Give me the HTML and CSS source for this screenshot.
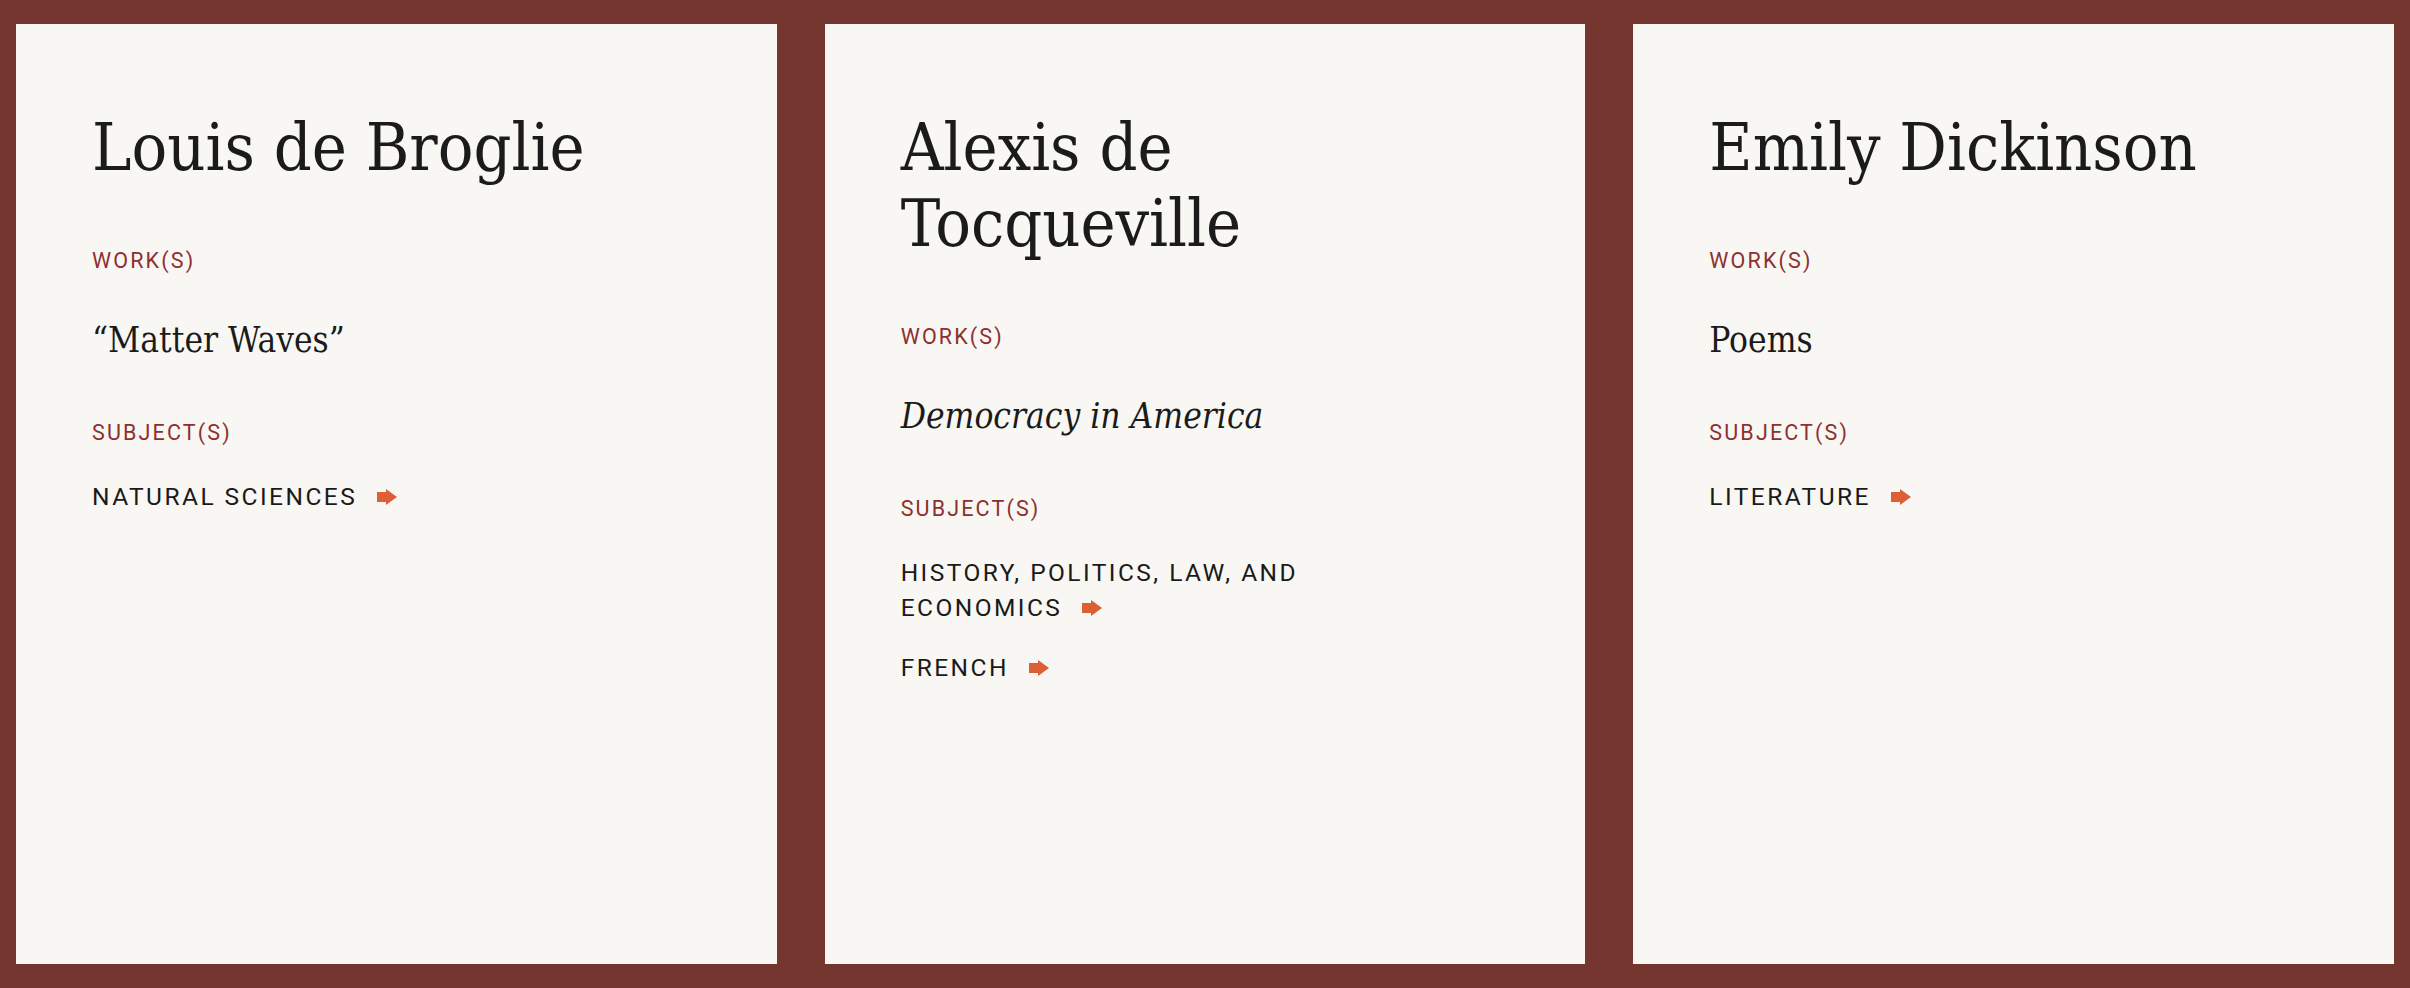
FILE: index.html
```html
<!DOCTYPE html>
<html lang="en">
<head>
<meta charset="utf-8">
<title>Authors</title>
<link rel="stylesheet" href="styles.css">
</head>
<body>
<main class="grid">
  <article class="card">
    <h2 class="name">Louis de Broglie</h2>
    <div class="label">Work(s)</div>
    <p class="work">“Matter Waves”</p>
    <div class="label label-subject">Subject(s)</div>
    <ul class="subjects">
      <li><a class="subject" href="#">Natural Sciences<svg class="arrow" viewBox="0 0 20 16" width="20" height="16"><path d="M0 3h9V0l11 8-11 8v-3H0z"/></svg></a></li>
    </ul>
  </article>
  <article class="card">
    <h2 class="name">Alexis de Tocqueville</h2>
    <div class="label">Work(s)</div>
    <p class="work"><em>Democracy in America</em></p>
    <div class="label label-subject">Subject(s)</div>
    <ul class="subjects">
      <li><a class="subject" href="#">History, Politics, Law, and Economics<svg class="arrow" viewBox="0 0 20 16" width="20" height="16"><path d="M0 3h9V0l11 8-11 8v-3H0z"/></svg></a></li>
      <li><a class="subject" href="#">French<svg class="arrow" viewBox="0 0 20 16" width="20" height="16"><path d="M0 3h9V0l11 8-11 8v-3H0z"/></svg></a></li>
    </ul>
  </article>
  <article class="card">
    <h2 class="name">Emily Dickinson</h2>
    <div class="label">Work(s)</div>
    <p class="work">Poems</p>
    <div class="label label-subject">Subject(s)</div>
    <ul class="subjects">
      <li><a class="subject" href="#">Literature<svg class="arrow" viewBox="0 0 20 16" width="20" height="16"><path d="M0 3h9V0l11 8-11 8v-3H0z"/></svg></a></li>
    </ul>
  </article>
</main>
</body>
</html>
```
FILE: styles.css
```css
* { box-sizing: border-box; }
html, body { margin: 0; padding: 0; }
body {
  background: #75352f;
  color: #1c1c1c;
  font-family: "DejaVu Serif", serif;
}
.grid {
  height: 100vh;
  padding: 24px 16px;
  display: grid;
  grid-template-columns: repeat(3, 1fr);
  gap: 48px;
}
.card {
  background: #f8f7f3;
  padding: 86px 76px 40px;
  min-width: 0;
}
.name {
  margin: 0;
  font-family: "DejaVu Serif Condensed", "DejaVu Serif", serif;
  font-stretch: condensed;
  font-weight: 400;
  font-size: 66px;
  line-height: 76px;
  color: #1b1b1b;
}
.label {
  margin-top: 61px;
  font-family: Roboto, "Liberation Sans", sans-serif;
  font-size: 21.5px;
  line-height: 28px;
  letter-spacing: 0.1em;
  text-transform: uppercase;
  color: #8e2f2f;
}
.work {
  margin: 43px 0 0;
  font-family: "DejaVu Serif Condensed", "DejaVu Serif", serif;
  font-stretch: condensed;
  font-size: 35px;
  line-height: 44px;
  color: #1b1b1b;
}
.work em { font-style: italic; }
.label-subject { margin-top: 57px; }
.subjects {
  list-style: none;
  margin: 32px 0 0;
  padding: 0;
  max-width: 440px;
  display: flex;
  flex-direction: column;
  gap: 25px;
}
.subject {
  font-family: Roboto, "Liberation Sans", sans-serif;
  font-size: 24.5px;
  line-height: 35px;
  letter-spacing: 0.1em;
  text-transform: uppercase;
  color: #1a1a1a;
  text-decoration: none;
}
.arrow {
  display: inline-block;
  margin-left: 20px;
  vertical-align: 0;
  fill: #dc5f35;
}
```
